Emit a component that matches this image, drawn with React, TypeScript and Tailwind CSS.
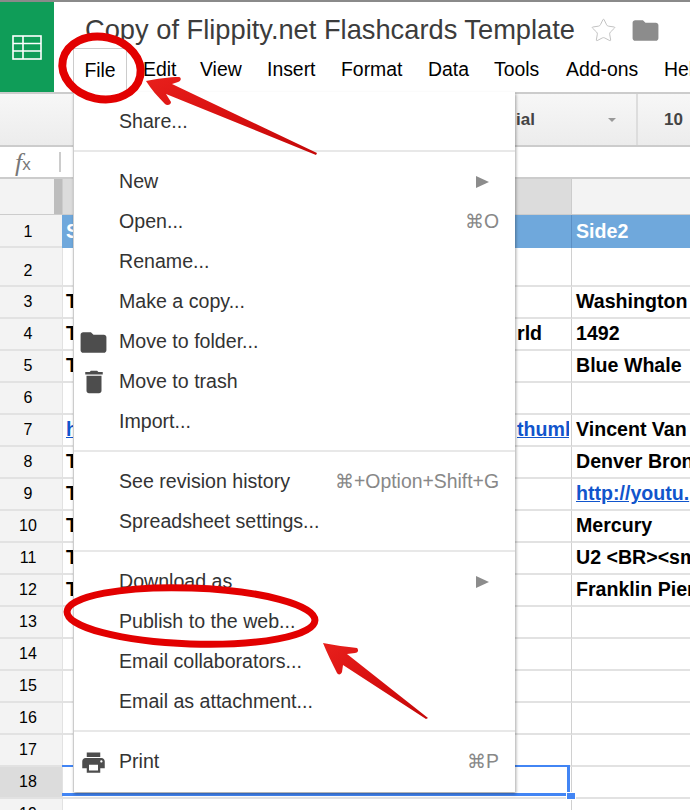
import React from 'react';
import { Star } from 'lucide-react';
import { MdDelete, MdFolder, MdPrint } from 'react-icons/md';

const MENUBAR = [
  { label: 'Edit', w: 'w-[57px]' },
  { label: 'View', w: 'w-[67px]' },
  { label: 'Insert', w: 'w-[74px]' },
  { label: 'Format', w: 'w-[87px]' },
  { label: 'Data', w: 'w-[66px]' },
  { label: 'Tools', w: 'w-[72px]' },
  { label: 'Add-ons', w: 'w-[98px]' },
  { label: 'Help', w: 'w-[50px]' },
];

type Row = { n: number; a?: string; right?: string; b?: string; link?: boolean; linkA?: boolean };

const ROWS: Row[] = [
  { n: 2 },
  { n: 3, a: 'T', b: 'Washington' },
  { n: 4, a: 'T', right: 'rld', b: '1492' },
  { n: 5, a: 'T', b: 'Blue Whale' },
  { n: 6 },
  { n: 7, a: 'h', linkA: true, right: 'thumb', b: 'Vincent Van' },
  { n: 8, a: 'T', b: 'Denver Bron' },
  { n: 9, a: 'T', b: 'http://youtu.', link: true },
  { n: 10, a: 'T', b: 'Mercury' },
  { n: 11, a: 'T', b: 'U2 <BR><sm' },
  { n: 12, a: 'T', b: 'Franklin Pier' },
  { n: 13 },
  { n: 14 },
  { n: 15 },
  { n: 16 },
  { n: 17 },
  { n: 18 },
  { n: 19 },
];

function Sep() {
  return <div className="my-[9px] h-[2px] bg-[#e8e8e8]" />;
}

function Item({ label, icon, shortcut, arrow }: { label: string; icon?: React.ReactNode; shortcut?: string; arrow?: boolean }) {
  return (
    <div className="flex h-[40px] items-center pr-[16px] pt-[2px] text-[#333]">
      <div className="flex w-[45px] shrink-0 items-center justify-center pr-[6px] text-[#4d4d4d]">{icon}</div>
      <span className="flex-1">{label}</span>
      {shortcut && <span className="text-[19.4px] text-[#888]">{shortcut}</span>}
      {arrow && <span className="mr-[10px] h-0 w-0 border-y-[6px] border-l-[13px] border-y-transparent border-l-[#8c8c8c]" />}
    </div>
  );
}

function FileMenu() {
  return (
    <div className="absolute left-[73px] top-[92px] z-10 h-[700px] w-[442px] border-l border-[#ccc] bg-white pt-[9px] text-[19.6px] shadow-[1px_2px_3px_rgba(0,0,0,0.35)]">
      <Item label="Share..." />
      <Sep />
      <Item label="New" arrow />
      <Item label="Open..." shortcut="⌘O" />
      <Item label="Rename..." />
      <Item label="Make a copy..." />
      <Item label="Move to folder..." icon={<MdFolder size={31} />} />
      <Item label="Move to trash" icon={<MdDelete size={30} />} />
      <Item label="Import..." />
      <Sep />
      <Item label="See revision history" shortcut="⌘+Option+Shift+G" />
      <Item label="Spreadsheet settings..." />
      <Sep />
      <Item label="Download as" arrow />
      <Item label="Publish to the web..." />
      <Item label="Email collaborators..." />
      <Item label="Email as attachment..." />
      <Sep />
      <Item label="Print" shortcut="⌘P" icon={<MdPrint size={27} />} />
    </div>
  );
}

// hand drawn looking red marks on top of the screenshot
function Annotations() {
  return (
    <svg className="absolute left-0 top-0 z-20" width="690" height="810" viewBox="0 0 690 810" fill="none">
      <defs>
        <linearGradient id="arrowRed" x1="0" y1="0" x2="1" y2="1">
          <stop offset="0" stopColor="#e8201c" />
          <stop offset="0.5" stopColor="#d81010" />
          <stop offset="1" stopColor="#c40808" />
        </linearGradient>
      </defs>
      <ellipse cx="101.5" cy="68" rx="39.5" ry="31" transform="rotate(12 101.5 68)" stroke="#e20000" strokeWidth="8" />
      <ellipse cx="191" cy="616" rx="124" ry="28" transform="rotate(2 191 616)" stroke="#e20000" strokeWidth="7" />
      <path
        d="M146 81 C156 79 170 77 179 77 C182 78 181 81 178 82 L172 84 L317 153 L316 155 L166 94 L171 102 C171 105 167 106 165 104 C158 97 151 89 146 81 Z"
        fill="url(#arrowRed)"
      />
      <path
        d="M323 643 C334 645 347 647 357 648 C359 650 358 653 355 653 L347 654 L428 718 L426 719 L343 665 L342 672 C341 675 338 675 337 673 C332 663 327 653 323 643 Z"
        fill="url(#arrowRed)"
      />
    </svg>
  );
}

function Grid() {
  return (
    <div className="font-['Liberation_Sans',sans-serif]">
      <div className="grid h-[36px] grid-cols-[62px_509px_1fr] border-b border-[#ccc]">
        <div className="flex justify-end bg-[#f3f3f3]">
          <div className="h-full w-[8px] bg-[#bdbdbd]" />
        </div>
        <div className="border-l border-[#ccc] bg-[#dcdcdc]" />
        <div className="border-l border-[#ccc] bg-[#f3f3f3]" />
      </div>
      <div className="grid h-[33px] grid-cols-[62px_509px_1fr] text-[19.6px] font-bold text-white">
        <div className="flex items-center justify-center border-b-2 border-[#e2e2e2] bg-[#f3f3f3] pr-[6px] pt-[2px] text-[16px] font-normal text-black">1</div>
        <div className="flex items-center bg-[#6fa8dc] pl-[4px]">S</div>
        <div className="flex items-center border-l border-[#5b8fc4] bg-[#6fa8dc] pl-[4px]">Side2</div>
      </div>
      {ROWS.map((r) => (
        <div key={r.n} className={`grid grid-cols-[62px_509px_1fr] text-[19.6px] font-bold text-black ${r.n === 2 ? 'h-[39px]' : 'h-[32px]'}`}>
          <div className={`flex items-center justify-center border-b-2 border-[#e2e2e2] pr-[6px] text-[16px] font-normal ${r.n === 18 ? 'bg-[#dcdcdc]' : 'bg-[#f3f3f3]'} ${r.n === 2 ? 'pt-[8px]' : ''}`}>{r.n}</div>
          <div className="flex items-center overflow-hidden border-b-2 border-l border-[#e2e2e2] pl-[3px]">
            <span className={`w-[451px] shrink-0 ${r.linkA ? 'text-[#1155cc] underline' : ''}`}>{r.a}</span>
            <span className={`w-[52px] shrink-0 overflow-hidden whitespace-nowrap ${r.right === 'thumb' ? 'text-[#1155cc] underline' : ''}`}>{r.right}</span>
          </div>
          <div className={`flex items-center overflow-hidden whitespace-nowrap border-b-2 border-l border-b-[#e2e2e2] border-l-[#d0d0d0] pl-[4px] ${r.link ? 'text-[#1155cc] underline' : ''}`}>{r.b}</div>
        </div>
      ))}
    </div>
  );
}

export default function App() {
  return (
    <div className="relative h-[810px] w-[690px] overflow-hidden bg-white font-['Liberation_Sans',sans-serif]">
      {/* --- HEADER --- */}
      <header className="flex h-[92px] border-t-2 border-[#8a8a8a] bg-white">
        <div className="flex h-[90px] w-[54px] shrink-0 items-center justify-center bg-[#0f9d58]">
          <svg width="30" height="25" viewBox="0 0 30 25" fill="none" stroke="#fff" strokeWidth="1.6">
            <rect x="1" y="1" width="28" height="23" />
            <path d="M1 8.5H29M1 16H29M11 1V24" />
          </svg>
        </div>
        <div className="min-w-0 flex-1">
          <div className="flex h-[46px] items-center pl-[31px] pt-[10px] text-[27.27px] text-[#3c3c3c]">
            <span className="whitespace-nowrap">Copy of Flippity.net Flashcards Template</span>
            <Star size={27} strokeWidth={0.8} className="ml-[15px] shrink-0 text-[#bbb]" />
            <MdFolder size={31} className="ml-[13px] shrink-0 text-[#8c8c8c]" />
          </div>
          <div className="flex h-[44px] items-center whitespace-nowrap pl-[19px] text-[19.4px] text-black">
            <div className="flex h-full w-[54px] shrink-0 items-center justify-center border-x border-t border-[#ccc]">File</div>
            <div className="w-[16px] shrink-0" />
            {MENUBAR.map((m) => (
              <span key={m.label} className={`shrink-0 ${m.w}`}>{m.label}</span>
            ))}
          </div>
        </div>
      </header>

      {/* --- TOOLBAR --- */}
      <div className="flex h-[55px] items-center justify-end border-y-2 border-[#ccc] bg-gradient-to-b from-[#f7f7f7] to-[#ececec] text-[17px] font-bold text-[#444]">
        <div className="flex h-full w-[122px] items-center border-r-2 border-[#ddd]">
          <span>ial</span>
          <span className="ml-[73px] h-0 w-0 border-x-[4px] border-t-[4px] border-x-transparent border-t-[#999]" />
        </div>
        <div className="flex w-[52px] items-center pl-[26px]">10</div>
      </div>

      {/* --- FORMULA BAR --- */}
      <div className="flex h-[32px] items-center border-b-2 border-[#ccc] bg-white">
        <div className="flex h-[20px] w-[61px] items-center border-r-2 border-[#ccc] pl-[15px] pt-[1px] font-['Liberation_Serif',serif] text-[26px] italic leading-[20px] text-[#777]">
          f<span className="pt-[4px] font-['Liberation_Sans',sans-serif] text-[17px] not-italic">x</span>
        </div>
      </div>

      <Grid />

      {/* selection outline of row 18 */}
      <div className="absolute left-[62px] top-[765px] h-[31px] w-[508px] border-b-[3px] border-r-[3px] border-t-[2px] border-[#4285f4]" />
      <div className="absolute left-[566px] top-[792px] h-[8px] w-[10px] border border-white bg-[#4285f4]" />

      <FileMenu />
      <Annotations />
    </div>
  );
}
